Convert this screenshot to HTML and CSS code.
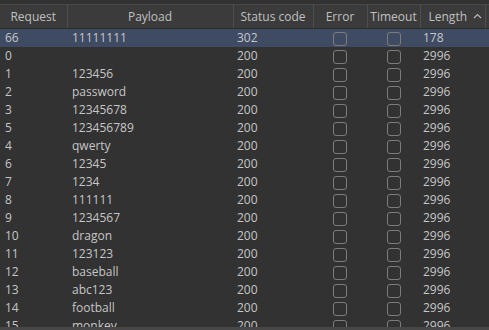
FILE: index.html
```html
<!DOCTYPE html>
<html lang="en">
<head>
    <meta charset="UTF-8">
    <title>Intruder Results</title>
    <link rel="stylesheet" href="styles.css">
</head>
<body>
    <div class="results">
        <table class="grid">
            <colgroup>
                <col class="c-req">
                <col class="c-payload">
                <col class="c-status">
                <col class="c-error">
                <col class="c-timeout">
                <col class="c-length">
                <col class="c-pad">
            </colgroup>
            <thead>
                <tr>
                    <th>Request</th>
                    <th>Payload</th>
                    <th>Status code</th>
                    <th>Error</th>
                    <th>Timeout</th>
                    <th class="sorted">Length
                        <svg class="caret" width="9" height="6" viewBox="0 0 9 6"><path d="M1 5 L4.5 1.5 L8 5" fill="none" stroke="#b8b8b8" stroke-width="1.2"/></svg>
                    </th>
                    <th></th>
                </tr>
            </thead>
            <tbody id="rows"></tbody>
        </table>
        <div class="hscroll"></div>
    </div>

    <script>
        // request, payload, status, length
        const results = [
            [66, '11111111', 302, 178],
            [0, '', 200, 2996],
            [1, '123456', 200, 2996],
            [2, 'password', 200, 2996],
            [3, '12345678', 200, 2996],
            [5, '123456789', 200, 2996],
            [4, 'qwerty', 200, 2996],
            [6, '12345', 200, 2996],
            [7, '1234', 200, 2996],
            [8, '111111', 200, 2996],
            [9, '1234567', 200, 2996],
            [10, 'dragon', 200, 2996],
            [11, '123123', 200, 2996],
            [12, 'baseball', 200, 2996],
            [13, 'abc123', 200, 2996],
            [14, 'football', 200, 2996],
            [15, 'monkey', 200, 2996]
        ];

        document.getElementById('rows').innerHTML = results.map((r, i) => `
            <tr class="${i === 0 ? 'selected' : ''}">
                <td>${r[0]}</td>
                <td>${r[1]}</td>
                <td>${r[2]}</td>
                <td class="check"><span class="box"></span></td>
                <td class="check"><span class="box"></span></td>
                <td>${r[3]}</td>
                <td></td>
            </tr>
        `).join('');
    </script>
</body>
</html>
```

FILE: styles.css
```css
body {
    margin: 0;
    background-color: #2b2b2b;
    font-family: "Open Sans", "Noto Sans", sans-serif;
    font-size: 12px;
    color: #c6c6c6;
    overflow: hidden;
}
.results {
    height: 330px;
    padding-top: 4px;
    box-sizing: border-box;
    position: relative;
    overflow: hidden;
    background-color: #323232;
}
.grid {
    width: 489px;
    table-layout: fixed;
    border-collapse: collapse;
}
.c-req { width: 67px; }
.c-payload { width: 166px; }
.c-status { width: 80px; }
.c-error { width: 54px; }
.c-timeout { width: 53px; }
.c-length { width: 65px; }
.c-pad { width: 4px; }
thead th {
    height: 23px;
    padding: 0;
    background-color: #3b3b3b;
    border-top: 1px solid #4a4a4a;
    border-right: 1px solid #4e4e4e;
    border-bottom: 1px solid #2c2c2c;
    font-weight: normal;
    color: #c0c0c0;
    text-align: center;
    white-space: nowrap;
}
thead th:last-child {
    border-right: none;
}
.sorted {
    text-align: left;
    padding-left: 8px;
}
.caret {
    margin-left: 3px;
    vertical-align: 2px;
}
tbody td {
    height: 18px;
    padding: 0 0 0 5px;
    line-height: 18px;
    white-space: nowrap;
    overflow: hidden;
}
tbody td:nth-child(3) {
    padding-left: 4px;
}
tbody td:nth-child(6) {
    padding-left: 3px;
}
tbody td.check {
    padding: 0;
    text-align: center;
}
.box {
    display: inline-block;
    width: 12px;
    height: 12px;
    border: 1px solid #7c7c7c;
    border-radius: 3px;
    vertical-align: middle;
}
.selected td {
    background-color: #3f4b63;
}
.hscroll {
    position: absolute;
    left: 0;
    right: 0;
    bottom: 0;
    height: 3px;
    background-color: #474747;
}
```
